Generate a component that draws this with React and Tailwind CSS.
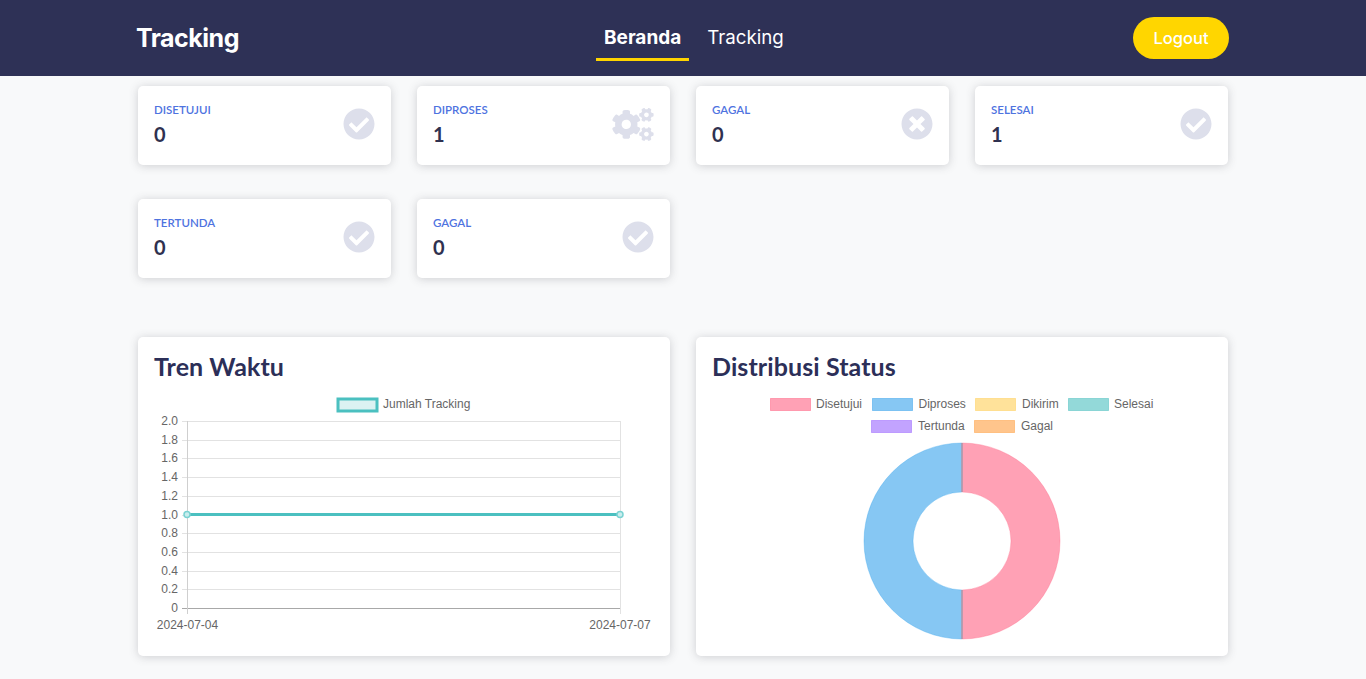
import { FaCheckCircle, FaCogs, FaTimesCircle } from 'react-icons/fa';

const stats = [
  { label: 'Disetujui', value: 0, icon: FaCheckCircle },
  { label: 'Diproses', value: 1, icon: FaCogs, iconClass: 'h-[33px] w-[42px]' },
  { label: 'Gagal', value: 0, icon: FaTimesCircle },
  { label: 'Selesai', value: 1, icon: FaCheckCircle },
  { label: 'Tertunda', value: 0, icon: FaCheckCircle },
  { label: 'Gagal', value: 0, icon: FaCheckCircle },
];

const yTicks = ['2.0', '1.8', '1.6', '1.4', '1.2', '1.0', '0.8', '0.6', '0.4', '0.2', '0'];

const legend = [
  { label: 'Disetujui', x: 770, y: 398, tx: 816, fill: 'rgba(255,99,132,0.6)', stroke: 'rgba(255,99,132,0.5)' },
  { label: 'Diproses', x: 872, y: 398, tx: 918.5, fill: 'rgba(54,162,235,0.6)', stroke: 'rgba(54,162,235,0.5)' },
  { label: 'Dikirim', x: 975, y: 398, tx: 1022, fill: 'rgba(255,206,86,0.6)', stroke: 'rgba(255,206,86,0.5)' },
  { label: 'Selesai', x: 1068, y: 398, tx: 1114, fill: 'rgba(75,192,192,0.6)', stroke: 'rgba(75,192,192,0.5)' },
  { label: 'Tertunda', x: 871, y: 420, tx: 918, fill: 'rgba(153,102,255,0.6)', stroke: 'rgba(153,102,255,0.5)' },
  { label: 'Gagal', x: 974, y: 420, tx: 1021, fill: 'rgba(255,159,64,0.6)', stroke: 'rgba(255,159,64,0.5)' },
];

const StatCard = ({ label, value, icon: Icon, iconClass = 'h-8 w-8' }) => (
  <div className="flex h-[79px] items-center justify-between rounded-[5px] bg-white pb-[3px] pl-4 pr-4 shadow-[0_1px_10px_rgba(58,59,69,0.22)]">
    <div className="-mt-[2px]">
      <div className="text-[11.5px] font-semibold uppercase leading-[18px] text-[#4e73df]">{label}</div>
      <div className="mt-[3px] text-xl font-bold leading-6 text-[#2f3150]">{value}</div>
    </div>
    <Icon className={`${iconClass} text-[#dddfeb]`} />
  </div>
);

const TrendChart = () => (
  <svg viewBox="154 390 500 250" className="h-[250px] w-[500px] font-['Liberation_Sans',sans-serif]">
    <rect x="338" y="399" width="39" height="12" fill="rgba(75,192,192,0.2)" stroke="#4bc0c0" strokeWidth="3" />
    <text x="383" y="408" fontSize="12" fill="#666">Jumlah Tracking</text>
    {yTicks.map((tick, i) => {
      const y = Math.round(421 + i * 18.7) + 0.5;
      return (
        <g key={tick}>
          <line x1="182" x2="621" y1={y} y2={y} stroke={tick === '0' ? '#a8a8a8' : '#e2e2e2'} />
          <text x="178" y={y + 3} textAnchor="end" fontSize="12" fill="#666">{tick}</text>
        </g>
      );
    })}
    <line x1="187.5" x2="187.5" y1="421" y2="614" stroke="#cfcfcf" />
    <line x1="620.5" x2="620.5" y1="421" y2="614" stroke="#e2e2e2" />
    <line x1="187" x2="620" y1="514.5" y2="514.5" stroke="#4bc0c0" strokeWidth="3" />
    <circle cx="187" cy="514.5" r="3" fill="#c9eded" stroke="#7ad2d2" strokeWidth="1.5" />
    <circle cx="620" cy="514.5" r="3" fill="#c9eded" stroke="#7ad2d2" strokeWidth="1.5" />
    <text x="187.5" y="629" textAnchor="middle" fontSize="12" fill="#666">2024-07-04</text>
    <text x="620" y="629" textAnchor="middle" fontSize="12" fill="#666">2024-07-07</text>
  </svg>
);

const StatusChart = () => (
  <svg viewBox="712 390 500 250" className="h-[250px] w-[500px] font-['Liberation_Sans',sans-serif]">
    {legend.map((item) => (
      <g key={item.label}>
        <rect x={item.x + 0.5} y={item.y + 0.5} width="40" height="12" fill={item.fill} stroke={item.stroke} />
        <text x={item.tx} y={item.y + 10} fontSize="12" fill="#666">{item.label}</text>
      </g>
    ))}
    <path d="M962 443 A98 98 0 0 1 962 639 L962 590 A49 49 0 0 0 962 492 Z" fill="rgba(255,99,132,0.6)" stroke="rgba(255,99,132,0.35)" />
    <path d="M962 443 A98 98 0 0 0 962 639 L962 590 A49 49 0 0 1 962 492 Z" fill="rgba(54,162,235,0.6)" stroke="rgba(54,162,235,0.35)" />
    <line x1="962" x2="962" y1="443" y2="492" stroke="#b59aa8" strokeWidth="1.5" />
    <line x1="962" x2="962" y1="590" y2="639" stroke="#b59aa8" strokeWidth="1.5" />
  </svg>
);

const ChartCard = ({ title, children }) => (
  <div className="h-[319px] rounded-[5px] bg-white px-4 pt-[11px] shadow-[0_1px_10px_rgba(58,59,69,0.22)]">
    <h3 className="h-[42px] text-[25px] font-bold leading-9 tracking-[0.1px] text-[#2c2f58]">{title}</h3>
    {children}
  </div>
);

export default function App() {
  return (
    <div className="min-h-screen bg-[#f8f9fa] font-['Lato',sans-serif]">
      <header className="h-[76px] bg-[#2e3156]">
        <div className="mx-auto flex h-full w-[1092px] items-center font-['Inter',sans-serif] text-white">
          <div className="-ml-px w-[460px] pt-[2px] text-[25px] font-bold tracking-[-0.5px]">Tracking</div>
          <nav className="flex self-start pt-[25px] text-[19px] leading-[26px]">
            <a href="#" className="border-b-[3px] border-[#ffd400] px-2 pb-[7px] font-bold">Beranda</a>
            <a href="#" className="ml-[10px] px-2 pb-[7px] text-[18.7px]">Tracking</a>
          </nav>
          <button className="ml-auto h-[42px] w-24 rounded-full bg-[#ffd600] text-[16.5px] font-medium text-white">Logout</button>
        </div>
      </header>

      <main className="mx-auto w-[1090px] pt-[10px]">
        <div className="grid grid-cols-4 gap-x-[26px] gap-y-[34px]">
          {stats.map((stat, i) => (
            <StatCard key={i} {...stat} />
          ))}
        </div>
        <div className="mt-[59px] grid grid-cols-2 gap-x-[26px]">
          <ChartCard title="Tren Waktu"><TrendChart /></ChartCard>
          <ChartCard title="Distribusi Status"><StatusChart /></ChartCard>
        </div>
      </main>
    </div>
  );
}
